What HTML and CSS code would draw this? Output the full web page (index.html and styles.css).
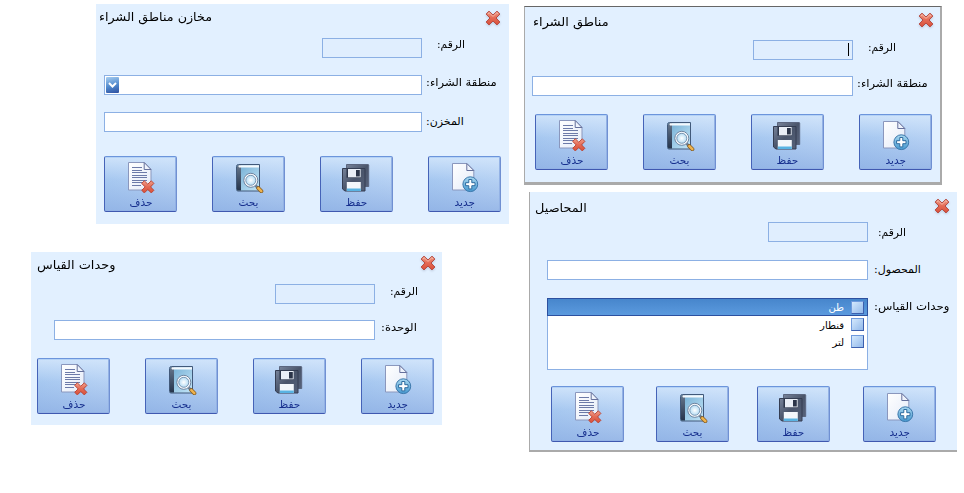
FILE: index.html
```html
<!DOCTYPE html>
<html lang="ar">
<head>
<meta charset="utf-8">
<title>مناطق الشراء</title>
<link rel="stylesheet" href="styles.css">
</head>
<body>
<svg class="defs" width="0" height="0" aria-hidden="true">
  <defs>
    <linearGradient id="paper" x1="0" y1="0" x2="1" y2="1"><stop offset="0" stop-color="#fff"/><stop offset="1" stop-color="#e4ebf8"/></linearGradient>
    <linearGradient id="red" x1="0" y1="0" x2="0" y2="1"><stop offset="0" stop-color="#f0a08c"/><stop offset=".5" stop-color="#e46a55"/><stop offset="1" stop-color="#d9503a"/></linearGradient>
    <linearGradient id="cover" x1="0" y1="0" x2="1" y2="1"><stop offset="0" stop-color="#6fabd2"/><stop offset="1" stop-color="#c4e6f8"/></linearGradient>
    <linearGradient id="spine" x1="0" y1="0" x2="0" y2="1"><stop offset="0" stop-color="#66778d"/><stop offset="1" stop-color="#25344b"/></linearGradient>
    <linearGradient id="disk" x1="0" y1="0" x2="1" y2="1"><stop offset="0" stop-color="#77839a"/><stop offset=".5" stop-color="#4a556b"/><stop offset="1" stop-color="#56627a"/></linearGradient>
    <linearGradient id="plus" x1="0" y1="0" x2="0" y2="1"><stop offset="0" stop-color="#a9d8f0"/><stop offset="1" stop-color="#4698cf"/></linearGradient>
    <radialGradient id="lens"><stop offset="0" stop-color="#fff"/><stop offset="1" stop-color="#b4dcf4"/></radialGradient>
  </defs>
  <symbol id="close" viewBox="0 0 16 16">
    <path d="M4 1.2 8 5l4-3.8L14.9 4 11 8l3.9 4-2.9 2.9L8 11l-4 3.9L1.1 12 5 8 1.1 4z" fill="url(#red)" stroke="#b54a42" stroke-width="1" stroke-linejoin="round"/>
    <path d="M3 3.900 4.200 2.800 8 6.400l3.800-3.600L13 3.900" fill="none" stroke="#f8c0ae" stroke-width=".8"/>
  </symbol>
  <symbol id="delete" viewBox="0 0 32 32">
    <path d="M4.500 1.500h15.700l6.800 7V29H4.500z" fill="url(#paper)" stroke="#8a97bd"/>
    <path d="M20.200 1.500v7H27z" fill="#eef3fc" stroke="#65709c"/>
    <path d="M8 6.500h10M8 9.500h10M8 11.500h15M8 14.500h15M8 16.500h15M8 19.500h15M8 21.500h11M8 24.500h9" stroke="#6c7aa8" stroke-width="1"/>
    <path d="m20.300 19.800 3.500 3.400 3.500-3.400 2.600 2.600-3.400 3.500 3.400 3.400-2.600 2.600-3.500-3.400-3.500 3.400-2.600-2.600 3.400-3.400-3.400-3.500z" fill="url(#red)" stroke="#b9402f" stroke-width=".9" stroke-linejoin="round"/>
  </symbol>
  <symbol id="find" viewBox="0 0 32 32">
    <path d="M4.500 5.500q0-2 2-2H27.500V30H6q-1.500 0-1.500-1.500z" fill="url(#cover)" stroke="#41597a"/>
    <path d="M5 5.500q0-1.500 1.500-1.500H9V29.500H6q-1 0-1-1z" fill="url(#spine)"/>
    <path d="M7 4.200H27v2.200H7q-1.200-1.100 0-2.200z" fill="#f4f9fd"/>
    <path d="m23.500 24.500 2.500 2.500" stroke="#6d7d91" stroke-width="2.500"/>
    <path d="m26.300 27.200 3 3" stroke="#825b24" stroke-width="4" stroke-linecap="round"/>
    <path d="m26.300 27.200 3 3" stroke="#efb34e" stroke-width="2.500" stroke-linecap="round"/>
    <circle cx="18.800" cy="19.300" r="7" fill="#fbfdff" stroke="#607694" stroke-width=".9"/>
    <circle cx="18.800" cy="19.300" r="5" fill="url(#lens)" stroke="#6d8aa8" stroke-width=".9"/>
  </symbol>
  <symbol id="save" viewBox="0 0 32 32">
    <path d="M6.500 3.500H28q.7 0 .7.700V25.500H9l-2.500-2z" fill="url(#disk)" stroke="#5b667f"/>
    <path d="M2.500 7.500H25V30H5l-2.500-2z" fill="url(#disk)" stroke="#343d52"/>
    <path d="M6.500 8H21v8.700H6.500z" fill="#2d364a"/>
    <path d="M8 8H20.700v8.300H8z" fill="#e9eef6"/>
    <path d="M16 9h3.800v6.500H16z" fill="#2b3448"/>
    <path d="M6.800 21H20.800v9H6.800z" fill="#f3f7fb"/>
    <path d="M6.800 27.500H20.800V30H6.800z" fill="#59b3e2"/>
  </symbol>
  <symbol id="new" viewBox="0 0 32 32">
    <path d="M4.500 2.500h14.300l7 7V29H4.500z" fill="url(#paper)" stroke="#8a97bd"/>
    <path d="M18.800 2.500v7h7z" fill="#eef3fc" stroke="#65709c"/>
    <circle cx="22.300" cy="23.200" r="7.400" fill="url(#plus)" stroke="#3c78ac"/>
    <path d="M20.800 18.500h3v3.200h3.200v3h-3.200v3.200h-3v-3.200h-3.200v-3h3.200z" fill="#fff" stroke="#2d6b9f" stroke-width="1"/>
  </symbol>
</svg>

<section class="window stores">
  <header class="titlebar"><h2>مخازن مناطق الشراء</h2><svg class="close"><use href="#close"/></svg></header>
  <div class="row number"><span class="field readonly"></span><label>الرقم:</label></div>
  <div class="row"><span class="field"><span class="dropdown"><svg viewBox="0 0 13 16"><path d="M3 6l3.500 3.500L10 6" fill="none" stroke="#fff" stroke-width="2"/></svg></span></span><label class="long">منطقة الشراء:</label></div>
  <div class="row third"><span class="field"></span><label class="store">المخزن:</label></div>
  <div class="toolbar">
    <div class="button"><svg><use href="#delete"/></svg><span>حذف</span></div>
    <div class="button"><svg><use href="#find"/></svg><span>بحث</span></div>
    <div class="button"><svg><use href="#save"/></svg><span>حفظ</span></div>
    <div class="button"><svg><use href="#new"/></svg><span>جديد</span></div>
  </div>
</section>

<section class="window regions">
  <header class="titlebar"><h2>مناطق الشراء</h2><svg class="close"><use href="#close"/></svg></header>
  <div class="row number"><span class="field readonly"><i class="caret"></i></span><label>الرقم:</label></div>
  <div class="row"><span class="field"></span><label class="long">منطقة الشراء:</label></div>
  <div class="toolbar">
    <div class="button"><svg><use href="#delete"/></svg><span>حذف</span></div>
    <div class="button"><svg><use href="#find"/></svg><span>بحث</span></div>
    <div class="button"><svg><use href="#save"/></svg><span>حفظ</span></div>
    <div class="button"><svg><use href="#new"/></svg><span>جديد</span></div>
  </div>
</section>

<section class="window crops">
  <header class="titlebar"><h2>المحاصيل</h2><svg class="close"><use href="#close"/></svg></header>
  <div class="row number"><span class="field readonly"></span><label>الرقم:</label></div>
  <div class="row"><span class="field"></span><label class="crop">المحصول:</label></div>
  <div class="row units-row">
    <ul class="list">
      <li class="selected"><span>طن</span><i></i></li>
      <li><span>قنطار</span><i></i></li>
      <li><span>لتر</span><i></i></li>
    </ul>
    <label class="unit-list">وحدات القياس:</label>
  </div>
  <div class="toolbar">
    <div class="button"><svg><use href="#delete"/></svg><span>حذف</span></div>
    <div class="button"><svg><use href="#find"/></svg><span>بحث</span></div>
    <div class="button"><svg><use href="#save"/></svg><span>حفظ</span></div>
    <div class="button"><svg><use href="#new"/></svg><span>جديد</span></div>
  </div>
</section>

<section class="window units">
  <header class="titlebar"><h2>وحدات القياس</h2><svg class="close"><use href="#close"/></svg></header>
  <div class="row number"><span class="field readonly"></span><label>الرقم:</label></div>
  <div class="row"><span class="field"></span><label class="unit">الوحدة:</label></div>
  <div class="toolbar">
    <div class="button"><svg><use href="#delete"/></svg><span>حذف</span></div>
    <div class="button"><svg><use href="#find"/></svg><span>بحث</span></div>
    <div class="button"><svg><use href="#save"/></svg><span>حفظ</span></div>
    <div class="button"><svg><use href="#new"/></svg><span>جديد</span></div>
  </div>
</section>
</body>
</html>
```
FILE: styles.css
```css
* { box-sizing: border-box; }
body {
  margin: 0;
  width: 964px;
  height: 493px;
  position: relative;
  overflow: hidden;
  background: #fff;
  color: #000;
  font: 11px/14px "DejaVu Sans", sans-serif;
}
.defs { position: absolute; }

/* Windows placed freely on the desktop */
.window {
  position: absolute;
  background: #e2f0ff;
  display: flex;
  flex-direction: column;
}
.stores { left: 96px; top: 4px; width: 413px; height: 220px; padding: 0 8px; }
.regions {
  left: 524px; top: 6px; width: 418px; height: 179px; padding: 0 7px;
  border: solid #aaa; border-width: 1px 2px 3px 1px; border-top-color: #666;
}
.crops {
  left: 529px; top: 192px; width: 428px; height: 260px; padding: 0 7px 0 17px;
  border: solid #aaa; border-width: 0 0 2px 1px;
}
.units { left: 31px; top: 252px; width: 411px; height: 173px; padding: 0 6px; }

.titlebar {
  display: flex;
  justify-content: space-between;
  align-items: flex-start;
  height: 34px;
  padding-top: 6px;
}
.titlebar h2 {
  margin: 0;
  font-size: 12px;
  font-weight: normal;
  line-height: 16px;
  direction: rtl;
  white-space: nowrap;
  transform-origin: left;
  transform: scaleX(1.075);
}
.close { width: 16px; height: 16px; flex: none; filter: drop-shadow(0 1px 1px #b9c5d8); }
.stores .titlebar { margin: 0 0 0 -5px; }
.stores h2 { margin-top: -1px; transform: scaleX(1.06); }
.regions .titlebar { height: 33px; margin-left: 1px; padding-top: 5px; }
.regions .close { margin-right: -1px; }
.regions h2 { margin-top: 2px; }
.crops .titlebar { height: 30px; margin-left: -12px; }
.crops h2 { margin-top: 2px; }
.units .titlebar { height: 32px; padding-top: 3px; }
.units h2 { margin-top: 2px; }

.row { display: flex; height: 20px; margin-bottom: 17px; }
.row label { direction: rtl; white-space: nowrap; margin-left: 5px; transform-origin: left; }
.number label { margin-left: 15px; transform: scaleX(.97); }
.field { width: 318px; height: 20px; background: #fff; border: 1px solid #8cb0e4; flex: none; }
.field.readonly { width: 100px; background: #e0eefe; }
.stores .number { padding-left: 218px; }
.regions .number { padding-left: 221px; margin-bottom: 16px; }
.crops .number { padding-left: 221px; margin-bottom: 18px; }
.units .number { padding-left: 238px; margin-bottom: 16px; }
.regions .field:not(.readonly), .crops .field:not(.readonly), .units .field:not(.readonly) { width: 321px; }
.units .row:not(.number) { padding-left: 17px; }
.crops .row { margin-bottom: 18px; }
.row .long { margin: 1px 0 0 4px; transform: scaleX(1.05); }
.units .unit { margin: 1px 0 0 6px; transform: scaleX(1.05); }
.regions .number label, .units .number label { margin-top: 1px; }
.crops .crop { margin: 3px 0 0 6px; }
.crops .unit-list { margin: 2px 0 0 6px; transform: scaleX(1.07); }
.crops .number label { margin: 4px 0 0 10px; }
.stores .third { margin-bottom: 24px; }
.stores .third label { margin: 3px 0 0 4px; }
.regions .row + .row, .units .row + .row { margin-bottom: 18px; }

.caret { display: block; width: 1px; height: 13px; background: #000; margin: 2px 0 0 94px; }
.dropdown {
  display: block; width: 13px; height: 16px; margin: 1px; border-radius: 1px;
  background: linear-gradient(165deg, #a6cdf0, #5089cd 55%, #2f4f9f);
}
.dropdown svg { display: block; width: 13px; height: 16px; }

.crops .units-row { height: 72px; margin-bottom: 16px; }
.list {
  width: 321px; height: 72px; margin: 0; padding: 0; list-style: none;
  background: #fff; border: 1px solid #8cb0e4; font-size: 10px;
}
.list li {
  display: flex; justify-content: flex-end; align-items: center; gap: 7px;
  height: 17px; padding-right: 3px;
}
.list li span { direction: rtl; padding-top: 2px; }
.list .selected {
  height: 18px; margin: -1px 0 0 -1px; width: 321px; border: 1px solid #2c509f;
  background: linear-gradient(#4786cc, #5b9ade); color: #fff;
}
.list i {
  width: 13px; height: 13px; border: 1px solid #6f9add; border-right-color: #3d60ae;
  border-bottom-color: #3d60ae; background: linear-gradient(135deg, #d4e9fd, #91b8ea);
}

.toolbar { display: flex; gap: 35px; }
.regions .toolbar { padding-left: 3px; }
.crops .toolbar { padding-left: 4px; gap: 32px; }
.crops .button:nth-child(3) { margin-left: -4px; }
.crops .button:nth-child(4) { margin-left: 1px; }
.button {
  width: 73px; height: 56px; flex: none;
  display: flex; flex-direction: column; align-items: center;
  padding-top: 4px; border: 1px solid; border-radius: 2px;
  border-color: #6c95dc #7090d2 #3f58b0 #4563b8;
  background: linear-gradient(to bottom, rgba(214,232,252,.85), rgba(190,214,245,.2) 42%, rgba(140,173,226,.65) 100%), linear-gradient(90deg, #a0c4ef, #b4d0f3);
  box-shadow: inset -1px -1px #93b2e5, inset 0 1px #b4d2f6;
  color: #17308e;
}
.button svg { width: 32px; height: 32px; flex: none; margin-right: 1px; }
.button span { direction: rtl; line-height: 14px; margin-top: 3px; transform: scaleX(.95); }
```
